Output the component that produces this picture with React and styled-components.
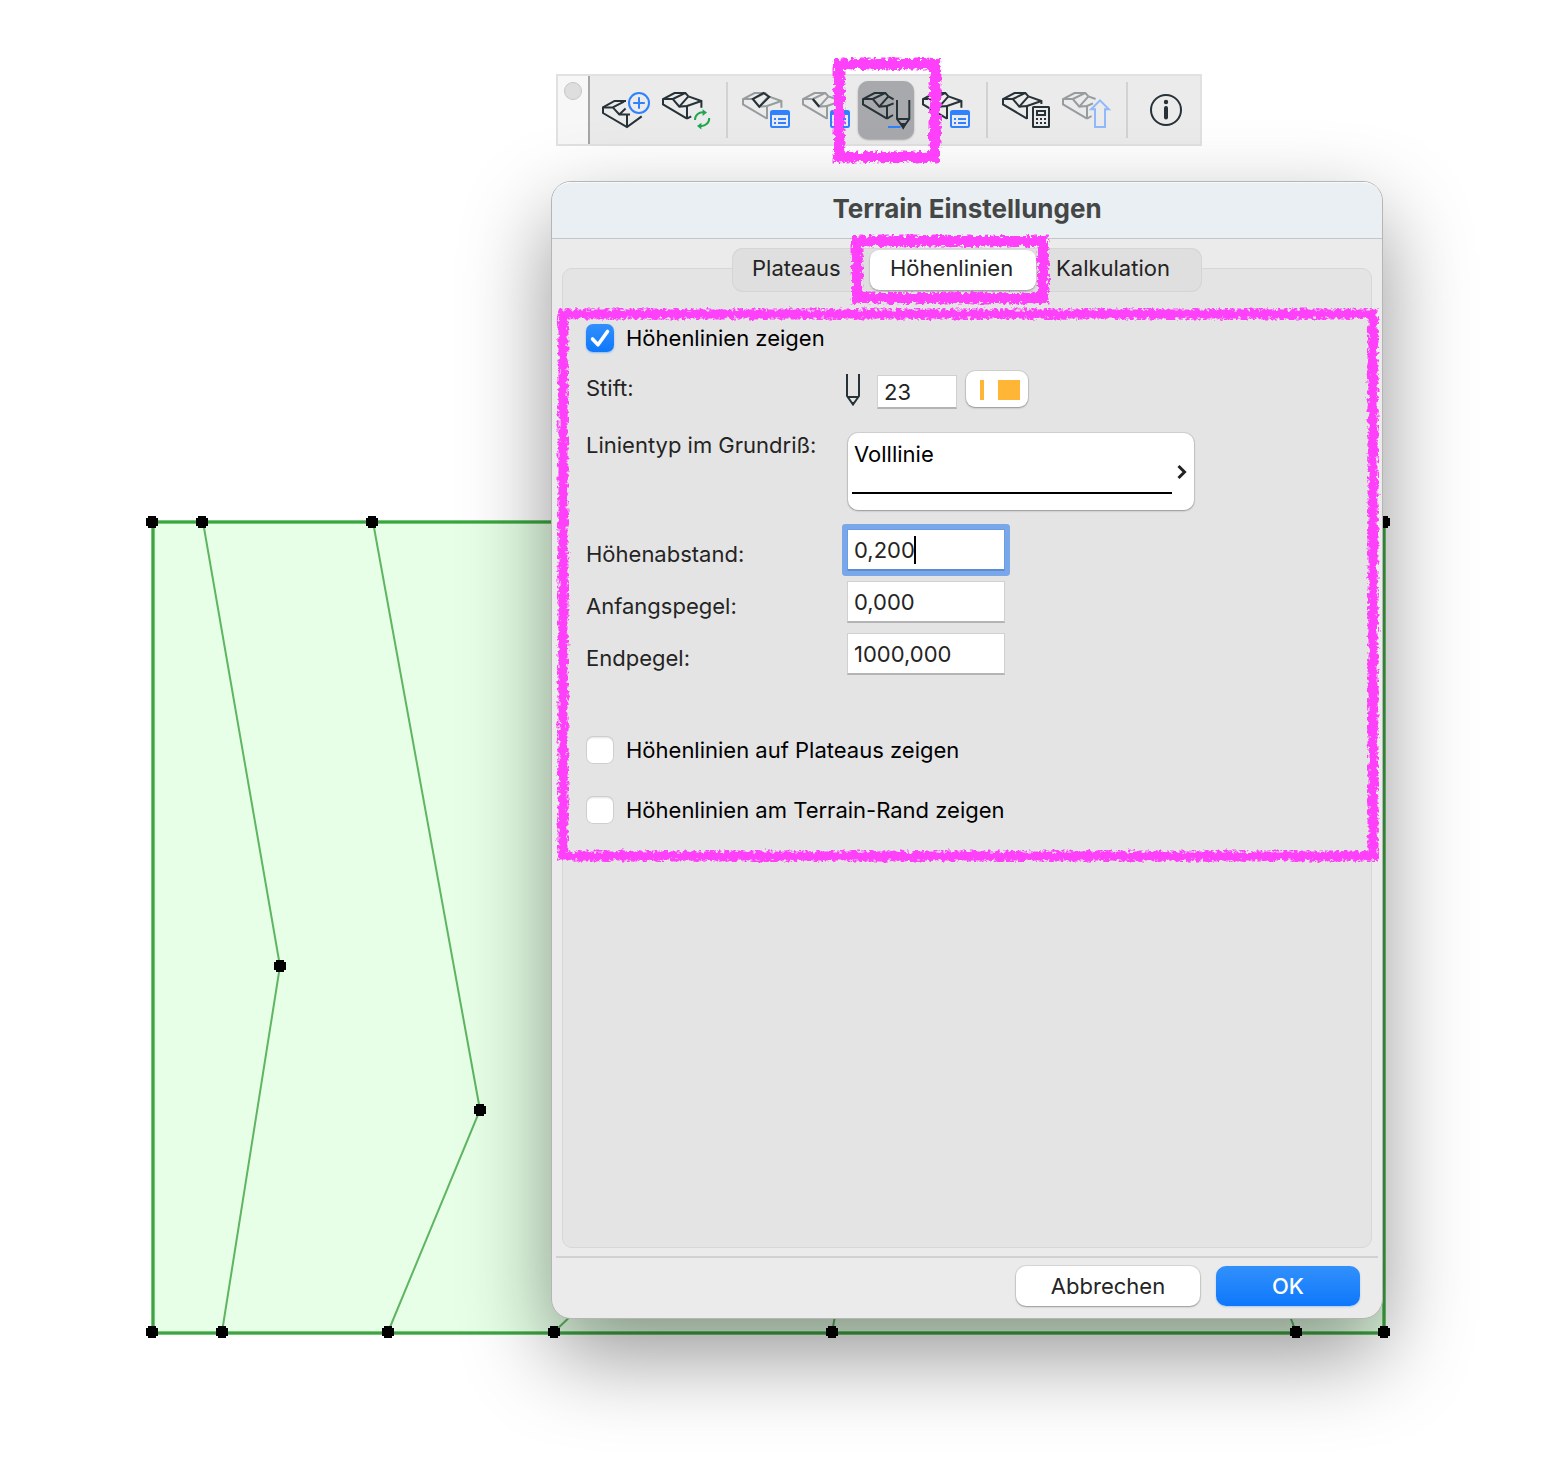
import React, { useState } from "react";
import styled, { createGlobalStyle, css } from "styled-components";

const INK = "#263238";
const FADED = "#979c9f";
const BLUE = "#2f82ff";
const PINK = "#ff40fb";

const GlobalStyle = createGlobalStyle`
  *, *::before, *::after { box-sizing: border-box; }
  body { margin: 0; background: #fff; }
  body, button, input { font-family: Inter, "Liberation Sans", sans-serif; }
`;

const Desktop = styled.main`
  position: relative;
  min-height: 100vh;
  overflow: hidden;
  background: #fff;
`;

const Drawing = styled.svg`
  position: absolute;
  inset: 0;
  width: 100%;
  height: 100%;
`;

/* ---------- Chalk frames ---------- */

const ChalkSvg = styled.svg`
  position: absolute;
  z-index: 5;
  top: ${(p) => p.$inset[0]}px;
  left: ${(p) => p.$inset[3]}px;
  width: calc(100% - ${(p) => p.$inset[1] + p.$inset[3]}px);
  height: calc(100% - ${(p) => p.$inset[0] + p.$inset[2]}px);
  overflow: visible;
  pointer-events: none;
`;

function Chalk({ inset, id, weight = 8 }) {
  return (
    <ChalkSvg $inset={inset} aria-hidden="true">
      <defs>
        <filter id={`${id}-core`} x="-20%" y="-20%" width="140%" height="140%">
          <feTurbulence type="fractalNoise" baseFrequency="0.24" numOctaves="3" seed="4" />
          <feDisplacementMap in="SourceGraphic" scale="8" xChannelSelector="R" yChannelSelector="G" />
          <feGaussianBlur stdDeviation="0.4" />
        </filter>
        <filter id={`${id}-dust`} x="-20%" y="-20%" width="140%" height="140%">
          <feTurbulence type="fractalNoise" baseFrequency="0.26" numOctaves="2" seed="9" result="n" />
          <feColorMatrix in="n" type="matrix" values="0 0 0 0 0  0 0 0 0 0  0 0 0 0 0  0 0 0 9 -4.7" result="m" />
          <feComposite in="SourceGraphic" in2="m" operator="in" />
          <feGaussianBlur stdDeviation="0.4" />
        </filter>
      </defs>
      <rect width="100%" height="100%" fill="none" stroke={PINK} strokeWidth={weight + 3} filter={`url(#${id}-dust)`} />
      <rect width="100%" height="100%" fill="none" stroke={PINK} strokeWidth={weight} filter={`url(#${id}-core)`} />
    </ChalkSvg>
  );
}

/* ---------- Toolbar ---------- */

const Toolbar = styled.div`
  position: absolute;
  top: 74px;
  left: 556px;
  display: flex;
  height: 72px;
  border: 2px solid #e1e1e1;
  background: #ebebeb;
`;

const Grip = styled.div`
  width: 32px;
  padding: 6px 0 0 6px;
  border-right: 2px solid #a6a6a6;
  background: #f7f7f7;

  &::before {
    content: "";
    display: block;
    width: 18px;
    height: 18px;
    border: 1px solid #c6c6c6;
    border-radius: 50%;
    background: #dedede;
  }
`;

const Tools = styled.div`
  display: flex;
  align-items: center;
  gap: 4px;
  padding: 0 6px 0 8px;
`;

const ToolButton = styled.button`
  position: relative;
  width: 56px;
  height: 58px;
  padding: 0;
  border: 0;
  border-radius: 10px;
  background: ${(p) => (p.$active ? "#a8a9ad" : "transparent")};
  box-shadow: ${(p) => (p.$active ? "0 1px 2px rgba(0, 0, 0, 0.3)" : "none")};

  & > svg:first-child {
    display: block;
    margin: 0 auto;
  }
`;

const ToolDivider = styled.span`
  width: 2px;
  height: 56px;
  margin: 0 6px 0 8px;
  background: #d2d2d2;
`;

function Icon({ children, color = INK }) {
  return (
    <svg width="56" height="56" viewBox="0 0 56 56" fill="none" stroke={color} strokeWidth="2" aria-hidden="true">
      {children}
    </svg>
  );
}

const Mesh = ({ right }) => (
  <>
    <path d="M29 36.6 5 22.4V17L16.5 11H27.4L30.4 14.4" />
    <path d="M5 17H14.8L21.3 24.6 29 24V37" />
    <path d="M14.8 17 27 11.2M21.3 24.6 30.4 14.4" />
    <path d={right} />
  </>
);

const FullMesh = () => <Mesh right="M30.4 14.4 43.4 19V25.7M29 24 43.4 19" />;

const ListBadge = () => (
  <g stroke={BLUE}>
    <rect x="33" y="29" width="18" height="16" rx="1.5" />
    <path d="M33 31h18" strokeWidth="4" />
    <path d="M36 37h2M40 37h8M36 41h2M40 41h8" />
  </g>
);

const NewTerrainIcon = () => (
  <Icon>
    <path d="M28 19H16.5L5 25.4V31L29 45.1 43.7 34.4" />
    <path d="M5 25.4H14.8L21.3 32.4H32M29 32.4V45.1M14.8 25.4 26 19.6M21.3 32.4 27.6 26.6" />
    <circle cx="41" cy="21" r="10" stroke={BLUE} />
    <path d="M41 15.2v11.6M35.2 21h11.6" stroke={BLUE} />
  </Icon>
);

const RefreshTerrainIcon = () => (
  <Icon>
    <FullMesh />
    <path d="M29 36.6l4.2-2.2" />
    <g stroke="#1fa84f">
      <path d="M37 38a7.6 7.6 0 0 1 9-7.6M51.2 36a7.6 7.6 0 0 1-9 7.8" />
      <path d="M44.6 27.2 49 30.6 44.6 34ZM43.4 40.8 39 44 43.4 47.4Z" fill="#1fa84f" stroke="none" />
    </g>
  </Icon>
);

const PlateauSettingsIcon = () => (
  <Icon color={FADED}>
    <FullMesh />
    <path d="M25.6 11 31.3 15 21.3 24.8 14.8 17Z" stroke={INK} />
    <ListBadge />
  </Icon>
);

const EdgeSettingsIcon = () => (
  <Icon color={FADED}>
    <FullMesh />
    <path d="M14.8 17 21.3 24.8" stroke={INK} strokeWidth="2.2" />
    <ListBadge />
  </Icon>
);

const ContourPenIcon = () => (
  <Icon>
    <Mesh right="M30.4 14.4 35.6 17.4M29 24 35.6 21.4M29 36.6 35 33" />
    <path d="M39 18V37L45.2 45.4 51.3 37V18M39 37H51.3" />
    <path d="M43.2 42h4l-2 3.6Z" fill={INK} />
    <path d="M30 45H42.6" stroke={BLUE} />
  </Icon>
);

const TerrainSettingsIcon = () => (
  <Icon>
    <FullMesh />
    <ListBadge />
  </Icon>
);

const CalculateIcon = () => (
  <Icon>
    <Mesh right="M30.4 14.4 43.4 19V22M29 24 43.4 19" />
    <rect x="35" y="25" width="16" height="20" rx="0.5" />
    <rect x="39" y="29" width="8" height="4" />
    <path d="M38 37h2M42 37h2M46 37h2M38 41h2M42 41h2M46 41h2" />
  </Icon>
);

const RaiseIcon = () => (
  <Icon color={FADED}>
    <Mesh right="M30.4 14.4 37.6 17M29 24 35 21.4M29 36.6 33.6 34" />
    <path d="M42 18.4 50.8 27.2H47V45H37V27.2H33.2Z" stroke="#8fb9fb" />
  </Icon>
);

const InfoIcon = () => (
  <Icon>
    <circle cx="28" cy="28" r="15" />
    <circle cx="28" cy="20" r="2.2" fill={INK} stroke="none" />
    <path d="M28 26v9.4" strokeWidth="4" strokeLinecap="round" />
  </Icon>
);

const TOOLS = [
  [
    ["Neues Terrain", NewTerrainIcon],
    ["Terrain aktualisieren", RefreshTerrainIcon],
  ],
  [
    ["Plateau Einstellungen", PlateauSettingsIcon],
    ["Kanten Einstellungen", EdgeSettingsIcon],
    ["Höhenlinien", ContourPenIcon, true],
    ["Terrain Einstellungen", TerrainSettingsIcon],
  ],
  [
    ["Kalkulation", CalculateIcon],
    ["Anheben", RaiseIcon],
  ],
  [["Info", InfoIcon]],
];

/* ---------- Dialog ---------- */

const Dialog = styled.section`
  position: absolute;
  top: 181px;
  left: 551px;
  width: 832px;
  border: 1px solid #b4b5b5;
  border-radius: 20px;
  background: #ebebeb;
  box-shadow: 0 36px 88px rgba(0, 0, 0, 0.42);
`;

const TitleBar = styled.header`
  display: flex;
  align-items: center;
  justify-content: center;
  height: 57px;
  padding-bottom: 2px;
  border-bottom: 1px solid #c3c6c8;
  border-radius: 19px 19px 0 0;
  background: #eaeff3;
  box-shadow: inset 0 2px 0 -1px #f7f9fa;
`;

const Title = styled.h1`
  margin: 0;
  font-size: 26px;
  line-height: 32px;
  font-weight: 700;
  color: #444746;
`;

const Body = styled.div`
  display: flex;
  flex-direction: column;
  padding: 9px 10px 0;
`;

const Tabs = styled.div`
  position: relative;
  z-index: 1;
  align-self: center;
  display: grid;
  grid-template-columns: 138px 166px 166px;
  height: 44px;
  margin-bottom: -24px;
  border-radius: 11px;
  background: #dfdfdf;
  box-shadow: inset 0 0 0 1px #d5d5d5;
`;

const Tab = styled.button`
  position: relative;
  height: 40px;
  margin: 2px 0;
  padding: 0 0 4px 20px;
  border: 0;
  border-radius: 9px;
  background: transparent;
  color: #242424;
  font-size: 22px;
  line-height: 28px;
  text-align: left;

  ${(p) =>
    p.$active &&
    css`
      background: #fff;
      box-shadow: 0 1px 2px rgba(0, 0, 0, 0.35);
    `}
`;

const Panel = styled.form`
  position: relative;
  display: flex;
  flex-direction: column;
  min-height: 980px;
  padding: 55px 23px 23px;
  border: 1px solid #d7d7d7;
  border-radius: 10px;
  background: #e4e4e4;
`;

const Check = styled.label`
  display: flex;
  align-items: center;
  gap: 12px;
  height: 28px;
  margin-top: ${(p) => p.$top || 0}px;
  color: #000;
  font-size: 22px;
  line-height: 28px;
`;

const CHECK_MARK = `url("data:image/svg+xml,%3Csvg xmlns='http://www.w3.org/2000/svg' viewBox='0 0 28 28'%3E%3Cpath d='M6.5 15 12 20.8 21.5 7.5' fill='none' stroke='white' stroke-width='3.6' stroke-linecap='round' stroke-linejoin='round'/%3E%3C/svg%3E")`;

const Box = styled.input`
  appearance: none;
  width: 28px;
  height: 28px;
  margin: 0;
  border-radius: 7px;
  background: #fff;
  box-shadow: inset 0 0 0 1px #cfcfcf, inset 0 2px 2px rgba(0, 0, 0, 0.12);

  &:checked {
    background: ${CHECK_MARK}, linear-gradient(#3290fb, #0e78fb);
    box-shadow: 0 1px 2px rgba(14, 120, 251, 0.4);
  }
`;

const Row = styled.div`
  display: grid;
  grid-template-columns: 261px 1fr;
  align-items: start;
  margin-top: ${(p) => p.$top}px;
`;

const Caption = styled.label`
  padding-top: ${(p) => p.$drop || 0}px;
  color: #242424;
  font-size: 22px;
  line-height: 26px;
`;

const PenGroup = styled.div`
  display: flex;
  align-items: flex-start;
  height: 40px;
`;

const PenSvg = styled.svg`
  margin: 4px 16px 0 -2px;
`;

const Field = styled.input`
  display: block;
  width: ${(p) => p.$width}px;
  height: ${(p) => p.$height || 42}px;
  margin: 0;
  padding: 0 6px;
  border: 1px solid #d0d0d0;
  border-bottom: 2px solid #b4b4b4;
  border-radius: 0;
  outline: 0;
  background: #fff;
  color: #242424;
  caret-color: transparent;
  font-size: 22px;
  line-height: 28px;

  ${(p) =>
    p.$focused &&
    css`
      border-color: #6a9de8;
      border-bottom-color: #5b8cd2;
      box-shadow: 0 0 0 5px #7aa7ea;
      border-radius: 1px;
    `}
`;

const PenField = styled(Field)`
  margin: 5px 8px 0 0;
`;

const FieldWrap = styled.div`
  position: relative;
  width: max-content;
`;

const Caret = styled.span`
  position: absolute;
  top: 7px;
  left: 67px;
  width: 2px;
  height: 28px;
  background: #000;
`;

const raised = css`
  border: 0;
  background: #fff;
  box-shadow: 0 0 0 1px rgba(0, 0, 0, 0.08), 0 1px 2px rgba(0, 0, 0, 0.3);
`;

const Swatch = styled.button`
  ${raised}
  display: flex;
  align-items: center;
  gap: 14px;
  width: 62px;
  height: 36px;
  margin: 1px;
  padding: 2px 8px 0 14px;
  border-radius: 9px;

  &::before,
  &::after {
    content: "";
    width: 4px;
    height: 20px;
    background: #ffb536;
  }

  &::after {
    width: 22px;
  }
`;

const LineType = styled.button`
  ${raised}
  display: grid;
  grid-template-columns: 320px 1fr;
  align-items: center;
  width: 346px;
  height: 77px;
  margin: 1px;
  padding: 0 0 0 4px;
  border-radius: 10px;
  color: #000;
  font-size: 22px;
  line-height: 28px;
  text-align: left;
`;

const LinePreview = styled.span`
  display: block;
  height: 54px;
  margin-bottom: 10px;
  padding-left: 2px;
  border-bottom: 2px solid #000;
`;

const Chevron = styled.svg`
  justify-self: center;
`;

const Footer = styled.footer`
  display: flex;
  justify-content: flex-end;
  gap: 16px;
  margin: 8px 4px 0;
  padding: 8px 18px 12px;
  border-top: 2px solid #d1d1d1;
`;

const FooterButton = styled.button`
  ${raised}
  width: ${(p) => (p.$primary ? 144 : 184)}px;
  height: 40px;
  padding: 0;
  border-radius: 10px;
  color: #242424;
  font-size: 22px;
  line-height: 28px;

  ${(p) =>
    p.$primary &&
    css`
      background: linear-gradient(#3290fb, #0e78fb);
      box-shadow: 0 1px 2px rgba(14, 120, 251, 0.3);
      color: #fff;
      font-weight: 500;
    `}
`;

/* ---------- Terrain plan ---------- */

const NODES = [
  [152, 522], [202, 522], [372, 522], [1384, 522],
  [280, 966], [480, 1110],
  [152, 1332], [222, 1332], [388, 1332], [554, 1332], [832, 1332], [1296, 1332], [1384, 1332],
];

const RIDGES = [
  "M203 522 280 966 222 1332",
  "M373 522 480 1110 388 1332",
  "M554 1332 600 1288",
  "M832 1332 840 1290",
  "M1296 1332 1280 1290",
];

function TerrainPlan() {
  return (
    <Drawing aria-hidden="true">
      <rect x="153" y="522" width="1231" height="811" fill="#e6ffe6" stroke="#6fcb72" strokeWidth="4" />
      <rect x="153" y="522" width="1231" height="811" fill="none" stroke="#43a047" strokeWidth="2" />
      {RIDGES.map((d) => (
        <path key={d} d={d} fill="none" stroke="#5fb562" strokeWidth="2" />
      ))}
      {NODES.map(([x, y]) => (
        <path key={`${x}-${y}`} d={`M${x - 4} ${y - 6}h8v2h2v8h-2v2h-8v-2h-2v-8h2z`} />
      ))}
    </Drawing>
  );
}

const TABS = ["Plateaus", "Höhenlinien", "Kalkulation"];

export default function App() {
  const [show, setShow] = useState(true);
  const [onPlateaus, setOnPlateaus] = useState(false);
  const [onEdge, setOnEdge] = useState(false);

  return (
    <>
      <GlobalStyle />
      <Desktop>
        <TerrainPlan />

        <Toolbar role="toolbar" aria-label="Terrain">
          <Grip />
          <Tools>
            {TOOLS.map((group, i) => (
              <React.Fragment key={i}>
                {i > 0 && <ToolDivider />}
                {group.map(([label, Glyph, active]) => (
                  <ToolButton key={label} type="button" aria-label={label} $active={active}>
                    <Glyph />
                    {active && <Chalk id="chalk-tool" inset={[-17, -21, -18, -19]} weight={10} />}
                  </ToolButton>
                ))}
              </React.Fragment>
            ))}
          </Tools>
        </Toolbar>

        <Dialog role="dialog" aria-labelledby="dialog-title">
          <TitleBar>
            <Title id="dialog-title">Terrain Einstellungen</Title>
          </TitleBar>
          <Body>
            <Tabs role="tablist">
              {TABS.map((name, i) => (
                <Tab key={name} type="button" role="tab" aria-selected={i === 1} $active={i === 1}>
                  {name}
                  {i === 1 && <Chalk id="chalk-tab" inset={[-9, -7, -8, -13]} weight={10} />}
                </Tab>
              ))}
            </Tabs>
            <Panel>
              <Check>
                <Box type="checkbox" checked={show} onChange={() => setShow(!show)} />
                Höhenlinien zeigen
              </Check>

              <Row $top={18}>
                <Caption htmlFor="pen" $drop={5}>Stift:</Caption>
                <PenGroup>
                  <PenSvg width="16" height="32" viewBox="0 0 16 32" fill="none" stroke={INK} strokeWidth="2" aria-hidden="true">
                    <path d="M2 0V22L8 30.5 14 22V0M2 23H14" />
                    <path d="M6.4 28h3.2L8 31Z" fill={INK} stroke="none" />
                  </PenSvg>
                  <PenField id="pen" $width={80} $height={34} defaultValue="23" />
                  <Swatch type="button" aria-label="Stiftfarbe" />
                </PenGroup>
              </Row>

              <Row $top={22}>
                <Caption htmlFor="line-type">Linientyp im Grundriß:</Caption>
                <LineType id="line-type" type="button">
                  <LinePreview>Volllinie</LinePreview>
                  <Chevron width="14" height="16" viewBox="0 0 14 16" fill="none" stroke="#222" strokeWidth="3" aria-hidden="true">
                    <path d="M2.5 2 8.5 8 2.5 14" />
                  </Chevron>
                </LineType>
              </Row>

              <Row $top={18}>
                <Caption htmlFor="interval" $drop={12}>Höhenabstand:</Caption>
                <FieldWrap>
                  <Field id="interval" $width={158} $focused defaultValue="0,200" />
                  <Caret />
                </FieldWrap>
              </Row>
              <Row $top={10}>
                <Caption htmlFor="start" $drop={12}>Anfangspegel:</Caption>
                <Field id="start" $width={158} defaultValue="0,000" />
              </Row>
              <Row $top={10}>
                <Caption htmlFor="end" $drop={12}>Endpegel:</Caption>
                <Field id="end" $width={158} defaultValue="1000,000" />
              </Row>

              <Check $top={61}>
                <Box type="checkbox" checked={onPlateaus} onChange={() => setOnPlateaus(!onPlateaus)} />
                Höhenlinien auf Plateaus zeigen
              </Check>
              <Check $top={32}>
                <Box type="checkbox" checked={onEdge} onChange={() => setOnEdge(!onEdge)} />
                Höhenlinien am Terrain-Rand zeigen
              </Check>

              <Chalk id="chalk-form" inset={[45, -2, 391, 0]} weight={9} />
            </Panel>
          </Body>
          <Footer>
            <FooterButton type="button">Abbrechen</FooterButton>
            <FooterButton type="button" $primary>OK</FooterButton>
          </Footer>
        </Dialog>
      </Desktop>
    </>
  );
}
